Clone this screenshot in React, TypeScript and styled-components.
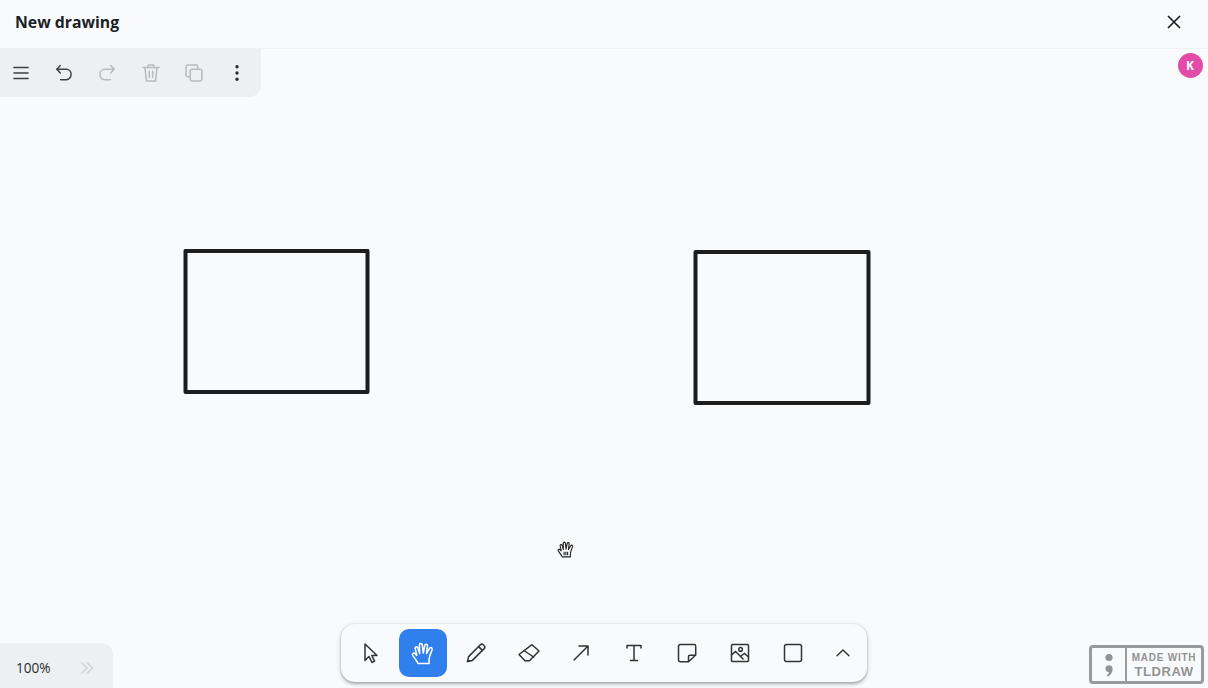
import { createGlobalStyle, styled } from "styled-components";

const GlobalStyle = createGlobalStyle`
    html, body, #root {
        margin: 0;
        height: 100%;
    }
    body {
        overflow: hidden;
        background: #f9fafc;
        color: #1d1d1d;
        font-family: "Open Sans", "Noto Sans", sans-serif;
    }
`;

const Page = styled.div`
    height: 100%;
    display: flex;
    flex-direction: column;
`;

const Header = styled.header`
    flex: 0 0 49px;
    box-sizing: border-box;
    display: flex;
    align-items: center;
    justify-content: space-between;
    padding: 0 24px 4px 15px;
    border-bottom: 1px solid #f0f1f3;
`;

const Title = styled.h1`
    margin: 0;
    font-size: 15.8px;
    font-weight: 700;
    color: #1b1f27;
`;

const CloseButton = styled.button`
    width: 20px;
    height: 20px;
    padding: 0;
    border: 0;
    background: none;
    display: flex;
    align-items: center;
    justify-content: center;
    color: #1b1f27;
`;

const Canvas = styled.main`
    flex: 1;
    position: relative;
    overflow: hidden;
`;

const Shape = styled.svg<{ $x: number; $y: number }>`
    position: absolute;
    left: ${(p) => p.$x}px;
    top: ${(p) => p.$y}px;
    fill: none;
    stroke: #1d1d1d;
    stroke-width: 4;
    stroke-linejoin: round;
`;

const HandCursor = styled.svg`
    position: absolute;
    left: 557px;
    top: 492px;
`;

const MenuPanel = styled.div`
    position: absolute;
    left: 0;
    top: 0;
    width: 261px;
    height: 48px;
    box-sizing: border-box;
    padding-left: 1px;
    display: flex;
    align-items: center;
    gap: 3.2px;
    background: #edf0f2;
    border-bottom-right-radius: 12px;
`;

const MenuButton = styled.button<{ $disabled?: boolean }>`
    width: 40px;
    height: 40px;
    padding: 0;
    border: 0;
    background: none;
    display: flex;
    align-items: center;
    justify-content: center;
    color: ${(p) => (p.$disabled ? "#b8babc" : "#404040")};
`;

const Avatar = styled.div`
    position: absolute;
    top: 4px;
    right: 5.5px;
    width: 25px;
    height: 25px;
    border-radius: 50%;
    background: #e34ba9;
    color: #fff;
    font-size: 12px;
    font-weight: 700;
    display: flex;
    align-items: center;
    justify-content: center;
`;

const ZoomPanel = styled.div`
    position: absolute;
    left: 0;
    bottom: 0;
    width: 113px;
    height: 45px;
    box-sizing: border-box;
    padding: 4px 0 0 16px;
    display: flex;
    align-items: center;
    gap: 29px;
    background: #edf0f2;
    border-top-right-radius: 12px;
    font-size: 13.6px;
    color: #2c2c2c;
`;

const ZoomArrows = styled.svg`
    color: #cfd1d3;
`;

const Toolbar = styled.div`
    position: absolute;
    left: 341px;
    bottom: 6px;
    width: 526px;
    height: 58px;
    box-sizing: border-box;
    padding: 0 2px 0 5px;
    display: flex;
    align-items: center;
    gap: 4.85px;
    background: #f9fafc;
    border-radius: 14px;
    box-shadow: 0 0 2px rgba(0, 0, 0, 0.16), 0 2px 3px rgba(0, 0, 0, 0.24),
        0 2px 6px rgba(0, 0, 0, 0.1);
`;

const ToolButton = styled.button<{ $active?: boolean; $narrow?: boolean }>`
    flex: 0 0 ${(p) => (p.$narrow ? "43px" : "48px")};
    height: 48px;
    padding: 0;
    border: 0;
    border-radius: 10px;
    display: flex;
    align-items: center;
    justify-content: center;
    background: ${(p) => (p.$active ? "#2f80ed" : "transparent")};
    color: ${(p) => (p.$active ? "#fff" : "#333")};
`;

const Watermark = styled.div`
    position: absolute;
    right: 4px;
    bottom: 4px;
    width: 115px;
    height: 39px;
    box-sizing: border-box;
    display: flex;
    border: 3px solid #9a9a9a;
    border-radius: 4px;
    background: #f9fafc;
    color: #929292;
`;

const WatermarkMark = styled.div`
    flex: 0 0 35px;
    box-sizing: border-box;
    border-right: 2px solid #9a9a9a;
    display: flex;
    align-items: center;
    justify-content: center;
`;

const WatermarkText = styled.div`
    flex: 1;
    display: flex;
    flex-direction: column;
    align-items: center;
    justify-content: center;
    font-family: "Liberation Sans", Arial, sans-serif;
    font-weight: 700;
`;

const WatermarkSmall = styled.span`
    font-size: 10px;
    line-height: 13px;
    letter-spacing: 0.75px;
`;

const WatermarkBig = styled.span`
    font-size: 13px;
    line-height: 15px;
    letter-spacing: 0.6px;
`;

function Icon({ children, size = 24, weight = 1.5 }: { children: React.ReactNode; size?: number; weight?: number }) {
    return (
        <svg
            width={size}
            height={size}
            viewBox="0 0 24 24"
            fill="none"
            stroke="currentColor"
            strokeWidth={weight}
            strokeLinecap="round"
            strokeLinejoin="round"
        >
            {children}
        </svg>
    );
}

const handPath =
    "M7.5 22.5 C6 19.5 3.5 16.5 1.8 14 C0.8 12.4 2.6 10.8 4 12 L6 14 L4.4 6.8 C4 4.8 6.6 4.2 7.2 6.2 L9 12 L8.8 3 C8.8 1 11.6 1 11.8 3 L12.8 11.5 L14.4 3.6 C14.8 1.6 17.4 2 17.2 4 L16.2 12 L19.4 6.6 C20.4 5 22.6 6 22 8 L19.4 15 C18.6 17.4 18.8 20 18.8 22.5 Z";

export default function App() {
    return (
        <Page>
            <GlobalStyle />
            <Header>
                <Title>New drawing</Title>
                <CloseButton aria-label="Close">
                    <svg width="16" height="16" viewBox="0 0 16 16" fill="none" stroke="currentColor" strokeWidth="1.7">
                        <path d="M2 2 L14 14 M14 2 L2 14" />
                    </svg>
                </CloseButton>
            </Header>
            <Canvas>
                <Shape $x={183} $y={200} width="187" height="145">
                    <rect x="2.5" y="1.9" width="182" height="141" />
                </Shape>
                <Shape $x={693} $y={201} width="178" height="155">
                    <rect x="2.5" y="2" width="173" height="151" />
                </Shape>
                <HandCursor width="17" height="17" viewBox="0 0 24 24" fill="#fff" stroke="#222" strokeWidth="1.6" strokeLinejoin="round">
                    <path d={handPath} />
                    <path d="M10 15 V20 M12.5 15 V20 M15 15 V20" />
                </HandCursor>

                <MenuPanel>
                    <MenuButton aria-label="Menu">
                        <Icon size={20} weight={1.8}>
                            <path d="M3.5 5.5 H20.5 M3.5 12 H20.5 M3.5 18.5 H20.5" />
                        </Icon>
                    </MenuButton>
                    <MenuButton aria-label="Undo">
                        <Icon size={20} weight={1.8}>
                            <path d="M7.5 3 L3.5 7.5 L7.5 12" />
                            <path d="M3.5 7.5 H15 C18 7.5 20.5 10 20.5 13.5 C20.5 17 18 20 15 20 H8" />
                        </Icon>
                    </MenuButton>
                    <MenuButton aria-label="Redo" $disabled>
                        <Icon size={20} weight={1.8}>
                            <path d="M16.5 3 L20.5 7.5 L16.5 12" />
                            <path d="M20.5 7.5 H9 C6 7.5 3.5 10 3.5 13.5 C3.5 17 6 20 9 20 H16" />
                        </Icon>
                    </MenuButton>
                    <MenuButton aria-label="Delete" $disabled>
                        <Icon size={20} weight={1.8}>
                            <path d="M2.5 5.5 H21.5" />
                            <path d="M8 5.5 L8.8 2.5 H15.2 L16 5.5" />
                            <path d="M4.8 5.5 L6.5 21.5 H17.5 L19.2 5.5" />
                            <path d="M10 10 V17 M14 10 V17" />
                        </Icon>
                    </MenuButton>
                    <MenuButton aria-label="Duplicate" $disabled>
                        <Icon size={20} weight={1.8}>
                            <rect x="7.5" y="7.5" width="14" height="14" rx="2" />
                            <path d="M7.5 16.5 H4.5 C3.4 16.5 2.5 15.6 2.5 14.5 V4.5 C2.5 3.4 3.4 2.5 4.5 2.5 H14.5 C15.6 2.5 16.5 3.4 16.5 4.5 V7.5" />
                        </Icon>
                    </MenuButton>
                    <MenuButton aria-label="More">
                        <svg width="20" height="20" viewBox="0 0 24 24" fill="#2c2c2c">
                            <circle cx="12" cy="4.5" r="2" />
                            <circle cx="12" cy="12" r="2" />
                            <circle cx="12" cy="19.5" r="2" />
                        </svg>
                    </MenuButton>
                </MenuPanel>

                <Avatar>K</Avatar>

                <ZoomPanel>
                    100%
                    <ZoomArrows width="14" height="14" viewBox="0 0 14 14" fill="none" stroke="currentColor" strokeWidth="1.3">
                        <path d="M1.5 1.5 L7 7 L1.5 12.5 M7 1.5 L12.5 7 L7 12.5" />
                    </ZoomArrows>
                </ZoomPanel>

                <Toolbar>
                    <ToolButton aria-label="Select">
                        <Icon>
                            <path d="M7 3 L7 19.5 L11 15.5 L14 21.5 L16.6 20.2 L13.8 14.5 L19 14.5 Z" />
                        </Icon>
                    </ToolButton>
                    <ToolButton aria-label="Hand" $active>
                        <Icon size={23} weight={1.6}>
                            <path d={handPath} />
                        </Icon>
                    </ToolButton>
                    <ToolButton aria-label="Draw">
                        <Icon>
                            <path d="M3.5 20.5 L4.6 15.6 L16.4 3.8 C17.2 3 18.4 3 19.2 3.8 L20.2 4.8 C21 5.6 21 6.8 20.2 7.6 L8.4 19.4 Z" />
                            <path d="M14.6 5.6 L18.4 9.4" />
                            <path d="M3.5 20.5 L6 19.8" />
                        </Icon>
                    </ToolButton>
                    <ToolButton aria-label="Eraser">
                        <Icon>
                            <path d="M15 3.7 L22 10 L12.5 19.8 H8 L2 13.5 Z" />
                            <path d="M7 9.5 L16.5 16" />
                        </Icon>
                    </ToolButton>
                    <ToolButton aria-label="Arrow">
                        <Icon>
                            <path d="M5 19 L19 5 M10 5 H19 V14" />
                        </Icon>
                    </ToolButton>
                    <ToolButton aria-label="Text">
                        <Icon>
                            <path d="M5 7 V4.5 H19 V7 M12 4.5 V19.5 M8.5 19.5 H15.5" />
                        </Icon>
                    </ToolButton>
                    <ToolButton aria-label="Note">
                        <Icon>
                            <path d="M5.5 3.5 H19 C20 3.5 20.7 4.2 20.7 5.2 V14 L13.5 20.7 H5.5 C4.2 20.7 3.5 20 3.5 19 V5.5 C3.5 4.4 4.4 3.5 5.5 3.5 Z" />
                            <path d="M20.5 14.2 H15 C14 14.2 13.5 14.8 13.5 15.6 V20.5" />
                        </Icon>
                    </ToolButton>
                    <ToolButton aria-label="Media">
                        <Icon>
                            <rect x="3.5" y="3.5" width="17" height="17" rx="1" />
                            <circle cx="12.6" cy="8.4" r="1.8" />
                            <path d="M3.5 14 L7.6 10.4 L15 18 M13 15 L16.4 12.4 L20.5 16" />
                        </Icon>
                    </ToolButton>
                    <ToolButton aria-label="Rectangle">
                        <Icon>
                            <rect x="3.5" y="3.5" width="17" height="17" rx="2" />
                        </Icon>
                    </ToolButton>
                    <ToolButton aria-label="More tools" $narrow>
                        <Icon size={22} weight={1.6}>
                            <path d="M5.5 15 L12 8.8 L18.5 15" />
                        </Icon>
                    </ToolButton>
                </Toolbar>

                <Watermark>
                    <WatermarkMark>
                        <svg width="10" height="24" viewBox="0 0 10 24" fill="currentColor">
                            <circle cx="5" cy="4.5" r="3.6" />
                            <path d="M1.4 15.6 C1.4 13.6 3 12.2 5 12.2 C7.2 12.2 8.6 13.8 8.6 16 C8.6 19 7 22 3.8 23.6 L2.8 22.2 C4 21.4 4.8 20.4 5 19.2 C3 19.2 1.4 17.8 1.4 15.6 Z" />
                        </svg>
                    </WatermarkMark>
                    <WatermarkText>
                        <WatermarkSmall>MADE WITH</WatermarkSmall>
                        <WatermarkBig>TLDRAW</WatermarkBig>
                    </WatermarkText>
                </Watermark>
            </Canvas>
        </Page>
    );
}
